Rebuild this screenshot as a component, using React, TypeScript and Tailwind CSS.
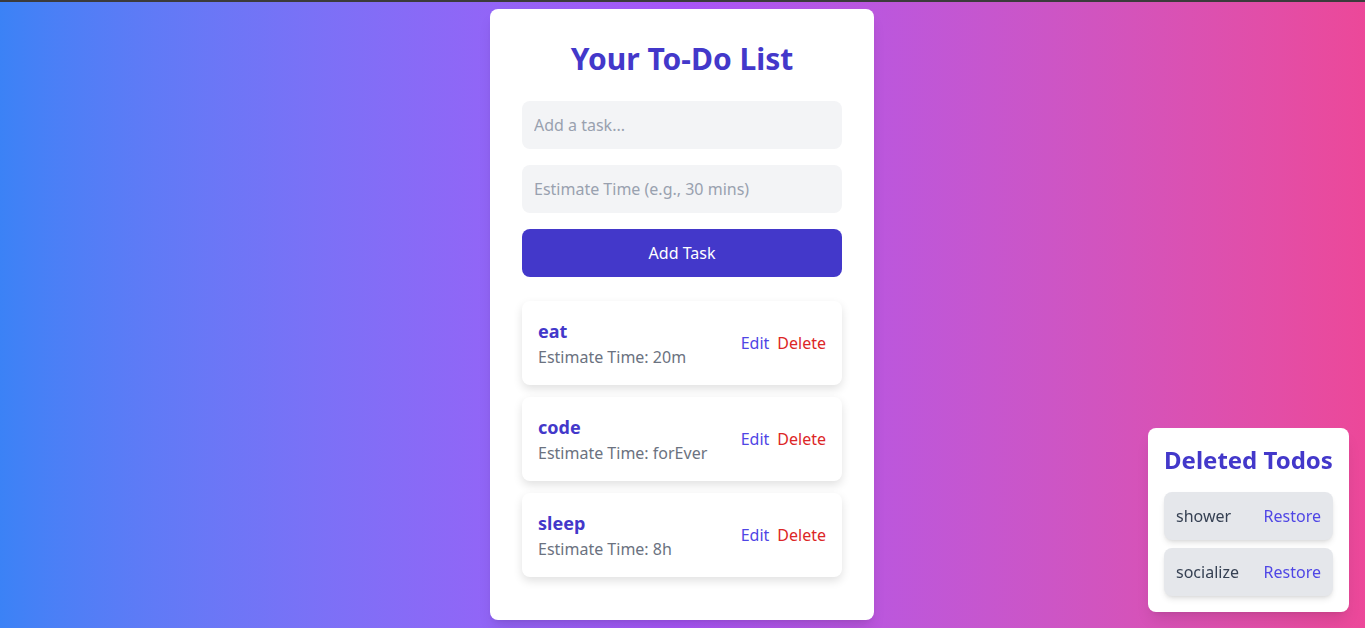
import { useState } from 'react'

interface Todo {
  id: number
  text: string
  time: string
}

const initialTodos: Todo[] = [
  { id: 1, text: 'eat', time: '20m' },
  { id: 2, text: 'code', time: 'forEver' },
  { id: 3, text: 'sleep', time: '8h' },
]

const initialDeleted: Todo[] = [
  { id: 4, text: 'shower', time: '10m' },
  { id: 5, text: 'socialize', time: '1h' },
]

export default function App() {
  const [todos, setTodos] = useState<Todo[]>(initialTodos)
  const [deleted, setDeleted] = useState<Todo[]>(initialDeleted)
  const [task, setTask] = useState('')
  const [time, setTime] = useState('')

  const addTodo = () => {
    if (!task.trim()) return
    setTodos([...todos, { id: Date.now(), text: task, time: time || '-' }])
    setTask('')
    setTime('')
  }

  const deleteTodo = (todo: Todo) => {
    setTodos(todos.filter(t => t.id !== todo.id))
    setDeleted([...deleted, todo])
  }

  const restoreTodo = (todo: Todo) => {
    setDeleted(deleted.filter(t => t.id !== todo.id))
    setTodos([...todos, todo])
  }

  return (
    <div className="min-h-screen border-t-2 border-[#3b3b3b] bg-gradient-to-r from-[#3b82f6] via-[#a855f7] to-[#ec4899] flex justify-center items-start pt-[7px] pr-px font-['Noto_Sans',sans-serif]">
      <div className="w-96 bg-white rounded-lg shadow-lg px-8 pt-8 pb-[43px]">
        <h1 className="text-3xl font-bold text-center text-[#4338ca] mb-6">Your To-Do List</h1>
        <input
          type="text"
          value={task}
          onChange={(e) => setTask(e.target.value)}
          placeholder="Add a task..."
          className="w-full bg-gray-100 rounded-lg px-3 py-3 text-base leading-6 placeholder:text-gray-400 outline-none mb-4"
        />
        <input
          type="text"
          value={time}
          onChange={(e) => setTime(e.target.value)}
          placeholder="Estimate Time (e.g., 30 mins)"
          className="w-full bg-gray-100 rounded-lg px-3 py-3 text-base leading-6 placeholder:text-gray-400 outline-none mb-4"
        />
        <button
          onClick={addTodo}
          className="w-full bg-[#4338ca] text-white rounded-lg py-3 text-base leading-6"
        >
          Add Task
        </button>

        <ul className="mt-6 space-y-3">
          {todos.map((todo) => (
            <li key={todo.id} className="bg-white rounded-lg shadow-[0_4px_10px_rgba(0,0,0,0.12)] p-4 flex items-center justify-between">
              <div>
                <div className="text-lg leading-7 font-bold text-[#4338ca]">{todo.text}</div>
                <div className="text-base leading-6 text-[#6b7280]">Estimate Time: {todo.time}</div>
              </div>
              <div className="flex gap-2 text-base">
                <button className="text-[#4f46e5]">Edit</button>
                <button onClick={() => deleteTodo(todo)} className="text-[#dc2626]">Delete</button>
              </div>
            </li>
          ))}
        </ul>
      </div>

      {/* Deleted panel */}
      <div className="fixed bottom-4 right-4 w-[201px] bg-white rounded-lg shadow-lg p-4">
        <h2 className="text-2xl leading-8 font-bold text-[#4338ca] mb-4 whitespace-nowrap">Deleted Todos</h2>
        <ul className="space-y-2">
          {deleted.map((todo) => (
            <li key={todo.id} className="bg-gray-200 rounded-lg shadow-md p-3 flex items-center justify-between">
              <span className="text-base leading-6 text-gray-700">{todo.text}</span>
              <button onClick={() => restoreTodo(todo)} className="text-base leading-6 text-[#4f46e5]">Restore</button>
            </li>
          ))}
        </ul>
      </div>
    </div>
  )
}
